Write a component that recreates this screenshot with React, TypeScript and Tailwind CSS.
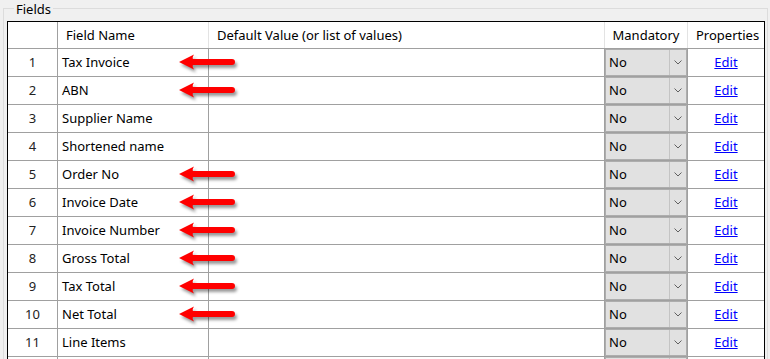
import React from "react";

const rows: { n: number; name: string; arrow: boolean }[] = [
  { n: 1, name: "Tax Invoice", arrow: true },
  { n: 2, name: "ABN", arrow: true },
  { n: 3, name: "Supplier Name", arrow: false },
  { n: 4, name: "Shortened name", arrow: false },
  { n: 5, name: "Order No", arrow: true },
  { n: 6, name: "Invoice Date", arrow: true },
  { n: 7, name: "Invoice Number", arrow: true },
  { n: 8, name: "Gross Total", arrow: true },
  { n: 9, name: "Tax Total", arrow: true },
  { n: 10, name: "Net Total", arrow: true },
  { n: 11, name: "Line Items", arrow: false },
  { n: 12, name: "", arrow: false },
];

function Arrow() {
  return (
    <svg
      className="absolute left-[118px] top-[2px] z-10 pointer-events-none"
      width="64"
      height="26"
      viewBox="0 0 64 26"
      style={{ filter: "drop-shadow(2px 3px 1.5px rgba(0,0,0,0.4))" }}
    >
      <path
        d="M3 11 L18 3.5 Q16 6.5 17 8 L56 8 A3 3 0 0 1 56 14 L17 14 Q16 15.5 18 18.5 Z"
        fill="#ff0000"
      />
    </svg>
  );
}

function Combo({ empty }: { empty?: boolean }) {
  return (
    <div className="flex h-full w-full border border-[#adadad] bg-[#e1e1e1]">
      <div className="flex flex-1 items-center pl-[3px] text-black">{empty ? "" : "No"}</div>
      <div className="flex w-[17px] items-center justify-center border-l border-[#c4c4c4]">
        {!empty && (
          <svg width="8" height="5" viewBox="0 0 8 5">
            <path d="M0.5 0.5 L4 4 L7.5 0.5" fill="none" stroke="#606060" strokeWidth="1" />
          </svg>
        )}
      </div>
    </div>
  );
}

export default function App() {
  return (
    <div className="h-[359px] w-[770px] overflow-hidden bg-[#f0f0f0] font-['Noto_Sans',sans-serif] text-[13px] leading-none text-black">
      <fieldset className="ml-[3px] w-[765px] border border-[#dcdcdc] pl-[3px] pr-[2px] pt-[5px]">
        <legend className="ml-[7px] px-[2px] pt-[2px] text-[13px] leading-[14px]">Fields</legend>
        <div className="w-[758px] border border-black bg-white">
          {/* header */}
          <div className="flex h-[27px] border-b border-[#a0a0a0]">
            <div className="w-[50px] border-r border-[#a0a0a0]" />
            <div className="flex w-[151px] items-center border-r border-[#e3e3e3] pl-[8px]">Field Name</div>
            <div className="flex w-[396px] items-center border-r border-[#e3e3e3] pl-[8px]">
              Default Value (or list of values)
            </div>
            <div className="flex w-[83px] items-center justify-center border-r border-[#e3e3e3]">Mandatory</div>
            <div className="flex w-[76px] items-center pl-[8px]">Properties</div>
          </div>
          {rows.map((r) => {
            const last = r.name === "";
            return (
              <div key={r.n} className="flex h-[28px] border-b border-[#a0a0a0]">
                <div className="flex w-[50px] items-center justify-center border-r border-[#a0a0a0] text-[#222]">
                  {last ? "" : r.n}
                </div>
                <div className="relative flex w-[151px] items-center border-r border-[#a0a0a0] pl-[4px]">
                  {r.name}
                  {r.arrow && <Arrow />}
                </div>
                <div className="w-[396px] border-r border-[#a0a0a0]" />
                <div className="w-[83px] border-r border-[#a0a0a0]">
                  <Combo empty={last} />
                </div>
                <div className="flex w-[76px] items-center justify-center">
                  {!last && (
                    <a href="#" className="text-[#0000ff] underline">
                      Edit
                    </a>
                  )}
                </div>
              </div>
            );
          })}
        </div>
      </fieldset>
    </div>
  );
}
